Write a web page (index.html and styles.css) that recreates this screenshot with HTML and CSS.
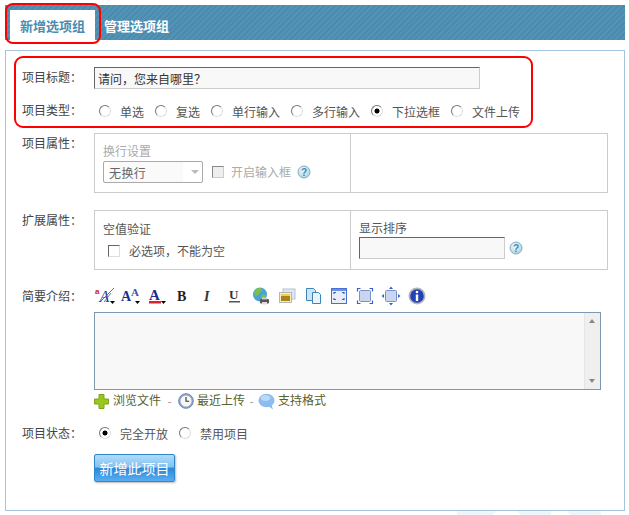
FILE: index.html
```html
<!DOCTYPE html>
<html lang="zh-CN">
<head>
<meta charset="utf-8">
<title>新增选项组</title>
<link rel="stylesheet" href="styles.css">
</head>
<body>
<div class="page">
  <div class="tabs">
    <a class="tab tab-active">新增选项组</a>
    <a class="tab">管理选项组</a>
  </div>
  <form class="panel">
    <div class="row row-title">
      <label class="label">项目标题&#xFF1A;</label>
      <input class="field field-title" type="text" value="请问&#xFF0C;您来自哪里&#xFF1F;">
    </div>
    <div class="row row-type">
      <label class="label">项目类型&#xFF1A;</label>
      <div class="radios">
        <label class="opt w56"><input type="radio" name="t"><span>单选</span></label>
        <label class="opt w56"><input type="radio" name="t"><span>复选</span></label>
        <label class="opt w80"><input type="radio" name="t"><span>单行输入</span></label>
        <label class="opt w80"><input type="radio" name="t"><span>多行输入</span></label>
        <label class="opt w80"><input type="radio" name="t" checked><span>下拉选框</span></label>
        <label class="opt w80"><input type="radio" name="t"><span>文件上传</span></label>
      </div>
    </div>
    <div class="row row-prop">
      <label class="label">项目属性&#xFF1A;</label>
      <div class="box">
        <div class="cell cell-left">
          <div class="muted cell-title">换行设置</div>
          <div class="inline">
            <div class="select"><span class="select-text">无换行</span><span class="select-arrow"></span></div>
            <span class="check check-disabled"></span>
            <span class="muted">开启输入框</span>
            <svg class="help" viewBox="0 0 14 14"><use href="#help"/></svg>
          </div>
        </div>
        <div class="cell cell-right"></div>
      </div>
    </div>
    <div class="row row-ext">
      <label class="label">扩展属性&#xFF1A;</label>
      <div class="box">
        <div class="cell cell-left">
          <div class="cell-title cell-title-ext">空值验证</div>
          <div class="inline inline-ext">
            <span class="check"></span>
            <span>必选项&#xFF0C;不能为空</span>
          </div>
        </div>
        <div class="cell cell-right">
          <div class="cell-title cell-title-sort">显示排序</div>
          <div class="inline">
            <input class="field field-sort" type="text">
            <svg class="help help-sort" viewBox="0 0 14 14"><use href="#help"/></svg>
          </div>
        </div>
      </div>
    </div>
    <div class="row row-tools">
      <label class="label">简要介绍&#xFF1A;</label>
      <div class="toolbar">
        <svg class="tool" viewBox="0 0 20 20">
          <text x="0" y="8" class="t-red">a</text><text x="4.600" y="15.500" class="t-script">A</text>
          <path d="M19 2 L6 15 M16 7 L9 16" stroke="#3a4fa8" stroke-width=".8" fill="none"/>
          <path d="M15 15h5l-2.500 3z" fill="#000"/>
        </svg>
        <svg class="tool" viewBox="0 0 20 20">
          <text x="0" y="15" class="t-blue-mid">A</text><text x="10" y="9.500" class="t-blue-small">A</text>
          <path d="M14 15h5l-2.500 3z" fill="#000"/>
        </svg>
        <svg class="tool" viewBox="0 0 20 20">
          <text x="2" y="14" class="t-blue">A</text>
          <rect x="2" y="15" width="12" height="2.500" fill="#d8242c"/>
          <path d="M14 15h5l-2.500 3z" fill="#000"/>
        </svg>
        <svg class="tool" viewBox="0 0 20 20"><text x="4" y="15" class="t-b">B</text></svg>
        <svg class="tool" viewBox="0 0 20 20"><text x="5" y="15" class="t-i">I</text></svg>
        <svg class="tool" viewBox="0 0 20 20"><text x="4" y="13" class="t-u">U</text><rect x="4" y="15" width="11" height="1.500" fill="#555"/></svg>
        <svg class="tool" viewBox="0 0 20 20">
          <circle cx="9" cy="8.500" r="7" fill="#4aa3d8"/>
          <path d="M4 4c3-3 6-2 7-1 1 2-2 3-3 5-1 2-3 2-4 1-1-1-1-3 0-5zM11 9c2-1 4 0 4 1-1 2-3 4-4 3-1-1-1-3 0-4z" fill="#7cc04a"/>
          <rect x="9" y="13" width="9" height="4.500" rx="1" fill="#555"/>
          <rect x="11" y="11.500" width="5" height="2" fill="#ccc"/>
          <rect x="11" y="16" width="5" height="2.500" fill="#ddd"/>
        </svg>
        <svg class="tool" viewBox="0 0 20 20">
          <rect x="6" y="3" width="12" height="10" fill="#dfe6f2" stroke="#b5c2d6"/>
          <rect x="2.500" y="6.500" width="12" height="10" fill="#f6eec4" stroke="#b5b5b5"/>
          <rect x="4" y="10" width="9" height="5" fill="#a88416"/>
          <rect x="4" y="8" width="9" height="2" fill="#e7d25e"/>
        </svg>
        <svg class="tool" viewBox="0 0 20 20">
          <path d="M3.500 2.500h7l2 2v10h-9z" fill="#cfe4f5" stroke="#3b86b8"/>
          <path d="M9.500 6.500h6l2 2v9h-8z" fill="#eaf4fb" stroke="#3b86b8"/>
        </svg>
        <svg class="tool" viewBox="0 0 20 20">
          <rect x="2.500" y="2.500" width="15" height="15" fill="#e8edf8" stroke="#4a6fd0"/>
          <rect x="3" y="3" width="14" height="2" fill="#6f8fe0"/>
          <path d="M5 8V6.500h2M15 8V6.500h-2M5 12v1.500h2M15 12v1.500h-2" stroke="#3b5fc4" stroke-width="1.200" fill="none"/>
        </svg>
        <svg class="tool" viewBox="0 0 20 20">
          <rect x="4.500" y="4.500" width="11" height="11" rx="1" fill="#c8d6f2" stroke="#7d93c8"/>
          <path d="M2.500 5.500v-3h3M14.500 2.500h3v3M2.500 14.500v3h3M14.500 17.500h3v-3" stroke="#3b5fc4" stroke-width="1.200" fill="none"/>
        </svg>
        <svg class="tool" viewBox="0 0 20 20">
          <rect x="4.500" y="4.500" width="11" height="11" rx="1" fill="#c8d6f2" stroke="#7d93c8"/>
          <path d="M10 0.500l2 2.500h-4zM10 19.500l2-2.500h-4zM0.500 10l2.500-2v4zM19.500 10l-2.500-2v4z" fill="#3b5fc4"/>
        </svg>
        <svg class="tool" viewBox="0 0 20 20">
          <circle cx="10" cy="10" r="8.500" fill="#b5b5b5"/>
          <circle cx="10" cy="10" r="6.800" fill="#2342b8"/>
          <circle cx="10" cy="6" r="1.300" fill="#fff"/>
          <rect x="8.800" y="8.500" width="2.400" height="6.500" fill="#fff"/>
        </svg>
      </div>
    </div>
    <div class="row row-editor">
      <div class="label"></div>
      <div class="editor">
        <textarea class="editor-text"></textarea>
        <div class="scrollbar"><span class="arrow-up"></span><span class="arrow-down"></span></div>
      </div>
    </div>
    <div class="row row-links">
      <div class="label"></div>
      <div class="links">
        <svg class="link-icon icon-plus" viewBox="0 0 15 15"><path d="M5 0.500h5v4.500h4.500v5H10v4.500H5V10H0.500V5H5z" fill="#9ac61e" stroke="#7da515"/></svg>
        <a class="link">浏览文件</a>
        <span class="sep">-</span>
        <svg class="link-icon" viewBox="0 0 16 16"><circle cx="8" cy="8" r="7.300" fill="#8fa8cf" stroke="#6c84ac"/><circle cx="8" cy="8" r="5.500" fill="#f7f7f4"/><path d="M8 4v4.300h3.200" stroke="#333" stroke-width="1.100" fill="none"/></svg>
        <a class="link">最近上传</a>
        <span class="sep sep-short">-</span>
        <svg class="link-icon icon-bubble" viewBox="0 0 17 17"><ellipse cx="8.500" cy="7.500" rx="8" ry="6.800" fill="#8dbdf0"/><ellipse cx="7.500" cy="5" rx="5" ry="3" fill="#bcd9f7"/><path d="M10 13l5 3.500-1.500-5z" fill="#8dbdf0"/></svg>
        <a class="link">支持格式</a>
      </div>
    </div>
    <div class="row row-status">
      <label class="label">项目状态&#xFF1A;</label>
      <div class="radios">
        <label class="opt w80"><input type="radio" name="s" checked><span>完全开放</span></label>
        <label class="opt w80"><input type="radio" name="s"><span>禁用项目</span></label>
      </div>
    </div>
    <div class="row row-submit">
      <div class="label"></div>
      <button class="submit" type="button">新增此项目</button>
    </div>
  </form>
  <div class="watermark"><i></i><i></i><i></i></div>
  <div class="mark mark-tab"></div>
  <div class="mark mark-form"></div>
</div>
<svg class="defs" width="0" height="0">
  <defs>
    <radialGradient id="helpfill" cx=".4" cy=".35" r=".7"><stop offset="0" stop-color="#f2fafc"/><stop offset="1" stop-color="#a9d0dc"/></radialGradient>
    <g id="help"><circle cx="7" cy="7" r="6" fill="url(#helpfill)" stroke="#7fb0bd"/><text x="7" y="10.500" class="t-help">?</text></g>
  </defs>
</svg>
</body>
</html>
```
FILE: styles.css
```css
* { box-sizing: border-box; }
html, body { margin: 0; padding: 0; background: #fff; }
body {
  font-family: "Noto Sans CJK SC", "Liberation Sans", sans-serif;
  font-size: 12px;
  color: #555;
  overflow: hidden;
}
.page { position: relative; width: 629px; height: 515px; padding: 5px 4px 0 5px; overflow: hidden; }

/* tabs */
.tabs {
  display: flex;
  height: 35px;
  padding: 5px 0 0 5px;
  background: repeating-linear-gradient(-45deg, #4a8cb0 0 2px, #5593b5 2px 4px);
}
.tab {
  width: 84px;
  height: 30px;
  padding-left: 10px;
  font-size: 13px;
  font-weight: 700;
  line-height: 31px;
  color: #fff;
}
.tab-active { width: 85px; background: #fff; color: #4a8cb0; margin-right: -1px; }

/* panel */
.panel {
  height: 461px;
  margin-top: 10px;
  padding: 16px 0 0 16px;
  border: 1px solid #a6c3de;
}
.row { display: flex; }
.label { flex: 0 0 72px; color: #444; line-height: 20px; }
.row-title { height: 22px; }
.row-type { height: 22px; margin-top: 11px; }
.row-prop { height: 60px; margin-top: 11px; }
.row-ext { height: 60px; margin-top: 17px; }
.row-tools { height: 20px; margin-top: 16px; }
.row-editor { height: 78px; margin-top: 6px; }
.row-links { height: 16px; margin-top: 3px; }
.row-status { height: 20px; margin-top: 14px; }
.row-submit { margin-top: 11px; }

/* fields */
.field {
  height: 22px;
  padding: 0 3px;
  font: inherit;
  color: #333;
  background: #f8f8f8;
  border: 1px solid #ccc;
  border-top-color: #666;
  border-left-color: #666;
  outline: none;
}
.field-title { width: 386px; }
.field-sort { width: 146px; }

/* radios */
.radios { display: flex; align-items: center; height: 22px; padding-left: 5px; }
.row-status .radios { height: 20px; }
.opt { display: flex; align-items: center; }
.w56 { width: 56px; }
.w80 { width: 80px; }
.opt input {
  appearance: none;
  flex: none;
  width: 12px;
  height: 12px;
  margin: 0 9px 0 0;
  border-radius: 50%;
  background: #fff;
  border: 1px solid #ddd;
  border-top-color: #777;
  border-left-color: #777;
}
.opt input:checked {
  background: radial-gradient(circle, #000 0 2.2px, #fff 2.8px);
}

/* property boxes */
.box { display: flex; width: 514px; height: 60px; border: 1px solid #ccc; }
.cell-left { width: 256px; padding-left: 8px; border-right: 1px solid #ccc; }
.cell-right { flex: 1; padding-left: 8px; }
.cell-title { line-height: 18px; margin-top: 8px; }
.cell-title-ext { margin-top: 9px; }
.muted { color: #aaa; }
.inline { display: flex; align-items: center; }
.select {
  display: flex;
  align-items: center;
  width: 100px;
  height: 22px;
  margin-top: 1px;
  padding-left: 5px;
  border: 1px solid #aaa;
  border-radius: 2px;
  color: #666;
  letter-spacing: .4px;
}
.select-text { width: 74px; height: 20px; line-height: 21px; background: #fafafa; }
.select-arrow {
  margin-left: 8px;
  border: 4px solid transparent;
  border-top: 4px solid #bbb;
  border-bottom: 0;
}
.check {
  display: block;
  flex: none;
  width: 12px;
  height: 12px;
  background: #fff;
  border: 1px solid #ddd;
  border-top-color: #666;
  border-left-color: #666;
}
.check-disabled { margin: 0 7px 0 9px; background: #eee; border-color: #888 #ccc #ccc #888; }
.inline-ext { margin: 4px 0 0 5px; gap: 9px; }
.help { flex: none; width: 14px; height: 14px; margin-left: 6px; }
.help-sort { margin-left: 4px; }
.t-help { font: 700 10px "Liberation Sans", sans-serif; fill: #3f86b8; text-anchor: middle; }
.defs { position: absolute; }

/* toolbar */
.toolbar { display: flex; height: 20px; gap: 6px; padding-left: 1px; }
.tool { display: block; width: 20px; height: 20px; flex: none; }
.t-red { font: 700 8px "Liberation Sans", sans-serif; fill: #d02020; }
.t-script { font: italic 400 16px "Liberation Serif", serif; fill: #2b3f9c; }
.t-blue { font: 700 15px "Liberation Serif", serif; fill: #1c2f8e; }
.t-blue-mid { font: 700 14px "Liberation Serif", serif; fill: #1c2f8e; }
.t-blue-small { font: 700 11px "Liberation Serif", serif; fill: #3a55b8; }
.t-b { font: 700 14px "Liberation Serif", serif; fill: #222; }
.t-i { font: italic 700 14px "Liberation Serif", serif; fill: #333; }
.t-u { font: 700 13px "Liberation Serif", serif; fill: #333; }

/* editor */
.editor { display: flex; width: 507px; height: 78px; border: 1px solid #7c97ae; background: #f8f8f8; }
.editor-text { flex: 1; border: 0; padding: 2px; resize: none; background: transparent; outline: none; }
.scrollbar {
  position: relative;
  flex: 0 0 16px;
  background: #efefef;
  border-left: 1px solid #e6e6e6;
}
.arrow-up, .arrow-down {
  position: absolute;
  left: 4px;
  border: 3.5px solid transparent;
}
.arrow-up { top: 6px; border-bottom: 4px solid #888; border-top: 0; }
.arrow-down { bottom: 6px; border-top: 4px solid #888; border-bottom: 0; }

/* links */
.links { display: flex; align-items: center; height: 16px; line-height: 14px; }
.link-icon { display: block; width: 16px; height: 16px; flex: none; }
.icon-plus { width: 15px; height: 15px; margin-right: 4px; }
.icon-bubble { width: 17px; height: 17px; }
.link { margin-left: 3px; color: #56622e; position: relative; top: -1px; }
.icon-plus + .link { margin-left: 0; }
.sep { width: 17px; text-align: center; color: #999; }
.sep-short { width: 13px; }

/* submit */
.submit {
  width: 81px;
  height: 28px;
  padding: 0;
  font: 14px "Noto Sans CJK SC", sans-serif;
  color: #fff;
  border: 1px solid #2f86c8;
  border-radius: 2px;
  background: linear-gradient(#b0dcfa 0, #84c2f2 45%, #2c88da 52%, #5aaef0 100%);
  box-shadow: 1px 1px 2px #bbb;
}

/* faint background below the panel */
.watermark { display: flex; margin-left: 452px; height: 4px; }
.watermark i { display: block; height: 4px; background: #eef5fb; }
.watermark i:nth-child(1) { width: 39px; clip-path: polygon(0 0, 100% 0, 92% 100%, 0 100%); }
.watermark i:nth-child(2) { width: 34px; margin-left: 21px; clip-path: polygon(0 0, 100% 0, 100% 100%, 10% 100%); }
.watermark i:nth-child(3) { width: 34px; margin-left: 16px; clip-path: polygon(0 0, 100% 0, 100% 100%, 10% 100%); }

/* red annotations */
.mark { position: absolute; border: 2px solid #f00; pointer-events: none; }
.mark-tab { left: 5px; top: 3px; width: 96px; height: 41px; border-radius: 8px; }
.mark-form { left: 14px; top: 56px; width: 519px; height: 72px; border-radius: 9px; }
```
